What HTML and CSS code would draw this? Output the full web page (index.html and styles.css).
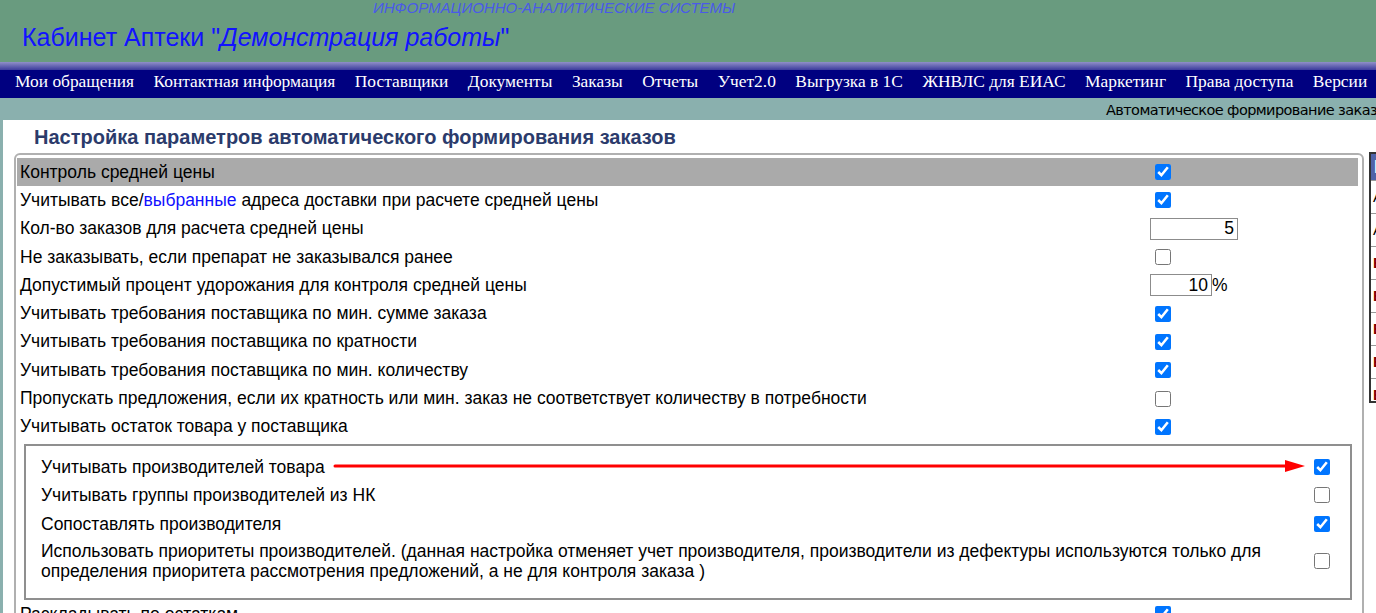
FILE: index.html
```html
<!DOCTYPE html>
<html lang="ru">
<head>
	<meta charset="UTF-8">
	<title>Кабинет Аптеки</title>
	<link rel="stylesheet" href="styles.css">
</head>
<body>
	<header class="top">
		<div class="brand-sub">ИНФОРМАЦИОННО-АНАЛИТИЧЕСКИЕ СИСТЕМЫ</div>
		<div class="brand">Кабинет Аптеки "<i>Демонстрация работы</i>"</div>
	</header>
	<div class="menu-shade"></div>
	<nav class="menu">
		<a>Мои обращения</a>
		<a>Контактная информация</a>
		<a>Поставщики</a>
		<a>Документы</a>
		<a>Заказы</a>
		<a>Отчеты</a>
		<a>Учет2.0</a>
		<a>Выгрузка в 1С</a>
		<a>ЖНВЛС для ЕИАС</a>
		<a>Маркетинг</a>
		<a>Права доступа</a>
		<a>Версии</a>
	</nav>
	<div class="crumb"><span>Автоматическое формирование заказов</span></div>

	<div class="wrap">
		<div class="content">
			<h3>Настройка параметров автоматического формирования заказов</h3>
			<div class="layout">
				<fieldset class="settings">
					<div class="row head">
						<span class="label">Контроль средней цены</span>
						<span class="ctl"><input type="checkbox" checked></span>
					</div>
					<div class="row">
						<span class="label">Учитывать все/<span class="blue">выбранные</span> адреса доставки при расчете средней цены</span>
						<span class="ctl"><input type="checkbox" checked></span>
					</div>
					<div class="row">
						<span class="label">Кол-во заказов для расчета средней цены</span>
						<span class="ctl"><input type="text" class="num wide" value="5"></span>
					</div>
					<div class="row">
						<span class="label">Не заказывать, если препарат не заказывался ранее</span>
						<span class="ctl"><input type="checkbox"></span>
					</div>
					<div class="row">
						<span class="label">Допустимый процент удорожания для контроля средней цены</span>
						<span class="ctl"><input type="text" class="num" value="10">%</span>
					</div>
					<div class="row">
						<span class="label">Учитывать требования поставщика по мин. сумме заказа</span>
						<span class="ctl"><input type="checkbox" checked></span>
					</div>
					<div class="row">
						<span class="label">Учитывать требования поставщика по кратности</span>
						<span class="ctl"><input type="checkbox" checked></span>
					</div>
					<div class="row">
						<span class="label">Учитывать требования поставщика по мин. количеству</span>
						<span class="ctl"><input type="checkbox" checked></span>
					</div>
					<div class="row">
						<span class="label">Пропускать предложения, если их кратность или мин. заказ не соответствует количеству в потребности</span>
						<span class="ctl"><input type="checkbox"></span>
					</div>
					<div class="row">
						<span class="label">Учитывать остаток товара у поставщика</span>
						<span class="ctl"><input type="checkbox" checked></span>
					</div>

					<fieldset class="group">
						<svg class="arrow" width="972" height="16" viewBox="0 0 972 16">
							<line x1="2" y1="8" x2="958" y2="8" stroke="#f00" stroke-width="3" stroke-linecap="round"/>
							<polygon points="952,2 972,8 952,14" fill="#f00"/>
						</svg>
						<div class="row">
							<span class="label">Учитывать производителей товара</span>
							<span class="ctl"><input type="checkbox" checked></span>
						</div>
						<div class="row">
							<span class="label">Учитывать группы производителей из НК</span>
							<span class="ctl"><input type="checkbox"></span>
						</div>
						<div class="row">
							<span class="label">Сопоставлять производителя</span>
							<span class="ctl"><input type="checkbox" checked></span>
						</div>
						<div class="row tall">
							<span class="label">Использовать приоритеты производителей. (данная настройка отменяет учет производителя, производители из дефектуры используются только для определения приоритета рассмотрения предложений, а не для контроля заказа )</span>
							<span class="ctl"><input type="checkbox"></span>
						</div>
					</fieldset>

					<div class="row">
						<span class="label">Раскладывать по остаткам</span>
						<span class="ctl"><input type="checkbox" checked></span>
					</div>
				</fieldset>

				<div class="side">
					<div class="side-head">П</div>
					<div class="side-cell">А</div>
					<div class="side-cell">А</div>
					<div class="side-cell red">Б</div>
					<div class="side-cell red">Б</div>
					<div class="side-cell red">Б</div>
					<div class="side-cell red">Б</div>
					<div class="side-cell red last">Б</div>
				</div>
			</div>
		</div>
	</div>
</body>
</html>
```

FILE: styles.css
```css
html, body {
	margin: 0;
	height: 100%;
}

body {
	overflow: hidden;
	font: 17.5px "Liberation Sans", Arial, sans-serif;
	color: #000;
	background: #8ab0ae;
}

.top {
	height: 62px;
	background: #699b7f;
	overflow: hidden;
}
.brand-sub {
	padding-left: 373px;
	font-size: 15px;
	line-height: 15px;
	font-style: italic;
	color: #4a5ae8;
	white-space: nowrap;
}
.brand {
	padding: 8px 0 0 22px;
	font-size: 25px;
	line-height: 28px;
	color: #1212ff;
	white-space: nowrap;
}

.menu-shade {
	height: 8px;
	background: linear-gradient(#9090c8, #3c3c9c);
}
.menu {
	display: flex;
	gap: 19.5px;
	height: 28px;
	padding-left: 15px;
	background: #000080;
	font: 17.4px "Liberation Serif", "Times New Roman", serif;
	line-height: 22px;
	color: #fff;
	white-space: nowrap;
	overflow: hidden;
}

.crumb {
	height: 22px;
	padding-left: 1106px;
	font: 14.5px "DejaVu Sans", sans-serif;
	line-height: 24px;
	letter-spacing: -0.6px;
	white-space: nowrap;
	overflow: hidden;
}

.wrap {
	padding-left: 3px;
}
.content {
	background: #fff;
	padding-top: 6px;
	height: 600px;
}
.content h3 {
	margin: 0 0 5px 31px;
	font-size: 20px;
	line-height: 22px;
	color: #2b3b6b;
	white-space: nowrap;
}

.layout {
	display: flex;
	align-items: flex-start;
	gap: 5px;
	margin-left: 11px;
	width: 1500px;
}

.settings {
	flex: none;
	width: 1341px;
	margin: 0;
	padding: 3px 4px 0 1px;
	border: 2px solid #b0b0b0;
	border-radius: 6px;
	min-width: 0;
}

.row {
	display: flex;
	align-items: center;
	min-height: 28.3px;
}
.row.head {
	background: #aaa;
}
.label {
	width: 1130px;
	padding-left: 3px;
	flex: none;
}
.ctl {
	display: flex;
	align-items: center;
}
.blue {
	color: #1010ff;
}

input[type="checkbox"] {
	width: 16px;
	height: 16px;
	margin: 0 0 0 5px;
	accent-color: #0075ff;
}
input.num {
	width: 62px;
	height: 22px;
	box-sizing: border-box;
	margin: 0;
	padding: 0 3px;
	border: 1px solid #8c8c8c;
	font: 17.5px "Liberation Sans", Arial, sans-serif;
	text-align: right;
}
input.num.wide {
	width: 88px;
}

.group {
	position: relative;
	margin: 3px 6px 0 7px;
	padding: 7px 0 14px 15px;
	border: 2px solid #8f8f8f;
}
.group .label {
	width: 1258px;
	padding-left: 0;
	line-height: 20px;
}
.group input[type="checkbox"] {
	margin-left: 15px;
}
.group .tall {
	min-height: 46px;
}
.arrow {
	position: absolute;
	left: 307px;
	top: 12px;
}

.side {
	flex: none;
	width: 60px;
	border: 2px solid #333;
	margin-top: -1px;
}
.side-head {
	height: 26px;
	background: #4f63a8;
	color: #fff;
	font-weight: bold;
	padding-left: 3px;
	line-height: 26px;
}
.side-cell {
	height: 32px;
	border-top: 1px solid #999;
	padding-left: 2px;
	line-height: 32px;
	font-size: 15px;
}
.side-cell.red {
	color: #800000;
	font-weight: bold;
}
.side-cell.last {
	height: 22px;
}
```
